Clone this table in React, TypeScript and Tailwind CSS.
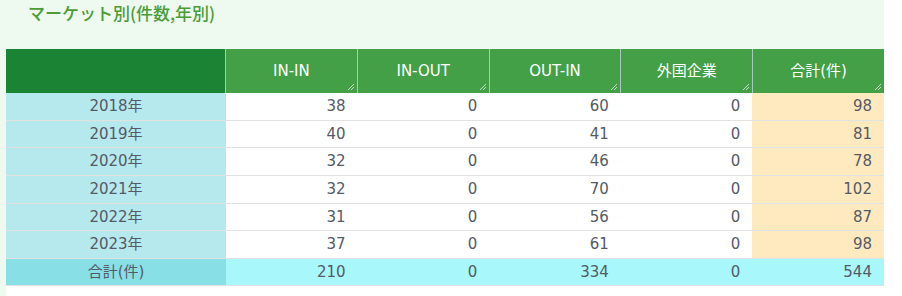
const years = [
  { y: "2018年", v: [38, 0, 60, 0, 98] },
  { y: "2019年", v: [40, 0, 41, 0, 81] },
  { y: "2020年", v: [32, 0, 46, 0, 78] },
  { y: "2021年", v: [32, 0, 70, 0, 102] },
  { y: "2022年", v: [31, 0, 56, 0, 87] },
  { y: "2023年", v: [37, 0, 61, 0, 98] },
];
const totals = [210, 0, 334, 0, 544];
const heads = ["IN-IN", "IN-OUT", "OUT-IN", "外国企業", "合計(件)"];

function Grip() {
  return (
    <svg width="8" height="8" viewBox="0 0 8 8" className="absolute right-[2px] bottom-[2px]">
      <path d="M7 1L1 7M7 4L4 7" stroke="#c8d8cc" strokeWidth="1" />
    </svg>
  );
}

export default function App() {
  return (
    <div
      className="w-[902px] h-[296px] bg-white overflow-hidden"
      style={{ fontFamily: '"DejaVu Sans", "Noto Sans CJK JP", sans-serif' }}
    >
      <div className="w-[884px] bg-[#eef9ef] pl-[6px]">
        <div
          className="h-[49px] pl-[22px] text-[17px] font-medium text-[#4c9c36] leading-[25px]"
          style={{ fontFamily: '"Noto Sans CJK JP", sans-serif' }}
        >
          マーケット別(件数,年別)
        </div>
        <div className="bg-white pb-[10px]">
          <div className="flex h-[44px] text-white text-[15px]">
            <div className="w-[220px] bg-[#1b8334] border-r border-[#a8c8c0]" />
            {heads.map((h, i) => (
              <div
                key={h}
                className={`relative flex-1 flex items-center justify-center bg-[#43a047] ${i < 4 ? "border-r border-[#a8c8c0]" : ""}`}
              >
                {h}
                <Grip />
              </div>
            ))}
          </div>
          {years.map((r) => (
            <div key={r.y} className="flex h-[27.67px] text-[15px] text-[#545a66] border-b border-[#e2e2e2]">
              <div className="w-[220px] bg-[#b5e9ed] flex items-center justify-center">{r.y}</div>
              {r.v.map((n, i) => (
                <div
                  key={i}
                  className={`flex-1 flex items-center justify-end pr-[12px] ${i === 4 ? "bg-[#ffeac0]" : ""}`}
                >
                  {n}
                </div>
              ))}
            </div>
          ))}
          <div className="flex h-[27px] text-[15px] text-[#545a66] border-b border-[#e2e2e2]">
            <div className="w-[220px] bg-[#88dfe6] flex items-center justify-center">合計(件)</div>
            {totals.map((n, i) => (
              <div key={i} className="flex-1 flex items-center justify-end pr-[12px] bg-[#a8f7fa]">
                {n}
              </div>
            ))}
          </div>
        </div>
      </div>
    </div>
  );
}
